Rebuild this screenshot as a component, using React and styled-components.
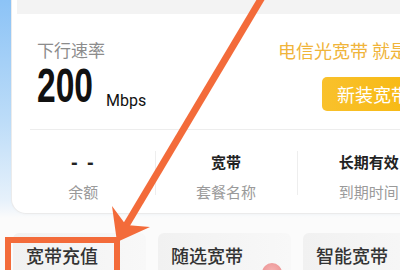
import React from "react";
import styled, { createGlobalStyle } from "styled-components";

const GlobalStyle = createGlobalStyle`
  html, body {
    margin: 0;
    padding: 0;
    overflow: hidden;
    background: #fbfbfb;
  }
  body {
    font-family: "Noto Sans CJK SC", "Noto Sans", sans-serif;
  }
`;

const Page = styled.div`
  position: relative;
  width: 400px;
  height: 270px;
  overflow: hidden;
  background: linear-gradient(
    180deg,
    #8cc3f6 0px,
    #bcdcf8 120px,
    #e6f1fb 200px,
    #fbfbfb 218px
  );
`;

//main card with the speed and package info
const Card = styled.section`
  margin-left: 12px;
  width: 428px;
  background: #fff;
  border-radius: 0 0 0 14px;
  box-shadow: 0 0 0 1px #ebebeb, 0 1px 3px rgba(0, 0, 0, 0.04);
`;

const TopStrip = styled.div`
  margin-left: 5px;
  height: 14px;
  background: #f3f3f3;
`;

const SpeedRow = styled.div`
  display: flex;
  justify-content: space-between;
  align-items: flex-start;
  padding: 24px 14px 0 25px;
`;

const SpeedInfo = styled.div`
  display: flex;
  flex-direction: column;
`;

const Label = styled.div`
  font-size: 17px;
  line-height: 24px;
  color: #8c8c8c;
`;

const Speed = styled.div`
  margin-top: 4px;
  line-height: 40px;
  height: 40px;
  white-space: nowrap;
`;

const Number = styled.span`
  display: inline-block;
  font-family: "Liberation Sans", sans-serif;
  font-weight: 700;
  font-size: 48px;
  color: #111;
  transform: scaleX(0.7);
  transform-origin: left center;
  margin-right: -24px;
`;

const Unit = styled.span`
  margin-left: 13px;
  font-family: Roboto, "Liberation Sans", sans-serif;
  font-size: 16px;
  color: #111;
  vertical-align: -4px;
`;

const Promo = styled.div`
  display: flex;
  flex-direction: column;
  align-items: flex-start;
`;

const Slogan = styled.div`
  font-size: 18px;
  line-height: 25px;
  color: #f0b43a;
  white-space: nowrap;
`;

const InstallButton = styled.button`
  margin-top: 14px;
  margin-left: 44px;
  height: 34px;
  padding: 0 15px;
  border: none;
  border-radius: 5px;
  background: linear-gradient(90deg, #f9c12c, #f7b80f);
  color: #fff;
  font-family: "Noto Sans CJK SC", sans-serif;
  font-size: 18px;
  white-space: nowrap;
`;

const Divider = styled.div`
  margin: 18px 0 0 18px;
  height: 1px;
  background: #ededed;
`;

const Stats = styled.div`
  display: grid;
  grid-template-columns: repeat(3, 1fr);
  padding: 21px 0 10px;
`;

const Stat = styled.div`
  position: relative;
  display: flex;
  flex-direction: column;
  align-items: center;

  &::before {
    content: "";
    display: ${(p) => (p.first ? "none" : "block")};
    position: absolute;
    left: 0;
    top: 0;
    width: 1px;
    height: 44px;
    background: #eeeeee;
  }
`;

const StatValue = styled.div`
  font-size: 15px;
  line-height: 22px;
  font-weight: 700;
  color: #222;
  white-space: nowrap;
`;

const Dashes = styled.div`
  font-family: "Liberation Sans", sans-serif;
  font-size: 20px;
  line-height: 22px;
  font-weight: 700;
  letter-spacing: 2px;
  color: #222;
`;

const StatLabel = styled.div`
  margin-top: 8px;
  font-size: 15px;
  line-height: 22px;
  color: #9a9a9a;
  white-space: nowrap;
`;

//service tiles at the bottom
const Tiles = styled.div`
  display: flex;
  gap: 12px;
  margin: 20px 0 0 13px;
`;

const Tile = styled.div`
  position: relative;
  flex: none;
  width: 133px;
  height: 60px;
  padding: 10px 13px;
  box-sizing: border-box;
  border-radius: 6px;
  background: linear-gradient(90deg, #f1f1f1, #f8f8f8);
  overflow: hidden;
`;

const TileTitle = styled.div`
  font-size: 18px;
  line-height: 25px;
  font-weight: 500;
  color: #333;
  white-space: nowrap;
`;

const Blob = styled.div`
  position: absolute;
  left: 104px;
  top: 30px;
  width: 20px;
  height: 20px;
  border-radius: 50%;
  background: radial-gradient(circle at 50% 40%, #f5b2b2, #e98a8a);
`;

//annotation drawn over the screenshot
const Highlight = styled.div`
  position: absolute;
  left: 5px;
  top: 237px;
  width: 115px;
  height: 45px;
  box-sizing: border-box;
  border: 6px solid #f36b3a;
`;

const Overlay = styled.svg`
  position: absolute;
  left: 0;
  top: 0;
  pointer-events: none;
`;

const stats = [
  { value: null, label: "余额" },
  { value: "宽带", label: "套餐名称" },
  { value: "长期有效", label: "到期时间" }
];

const tiles = ["宽带充值", "随选宽带", "智能宽带"];

export default function App() {
  return (
    <Page>
      <GlobalStyle />
      <Card>
        <TopStrip />
        <SpeedRow>
          <SpeedInfo>
            <Label>下行速率</Label>
            <Speed>
              <Number>200</Number>
              <Unit>Mbps</Unit>
            </Speed>
          </SpeedInfo>
          <Promo>
            <Slogan>电信光宽带 就是快</Slogan>
            <InstallButton>新装宽带</InstallButton>
          </Promo>
        </SpeedRow>
        <Divider />
        <Stats>
          {stats.map((s, i) => (
            <Stat key={s.label} first={i === 0}>
              {s.value ? <StatValue>{s.value}</StatValue> : <Dashes>- -</Dashes>}
              <StatLabel>{s.label}</StatLabel>
            </Stat>
          ))}
        </Stats>
      </Card>
      <Tiles>
        {tiles.map((t, i) => (
          <Tile key={t}>
            <TileTitle>{t}</TileTitle>
            {i === 1 && <Blob />}
          </Tile>
        ))}
      </Tiles>
      <Highlight />
      <Overlay width="400" height="270" viewBox="0 0 400 270">
        <line x1="264" y1="-6" x2="124" y2="229" stroke="#f36b3a" strokeWidth="7" />
        <polygon points="117,242 112,206 126,225 150,227" fill="#f36b3a" />
      </Overlay>
    </Page>
  );
}
